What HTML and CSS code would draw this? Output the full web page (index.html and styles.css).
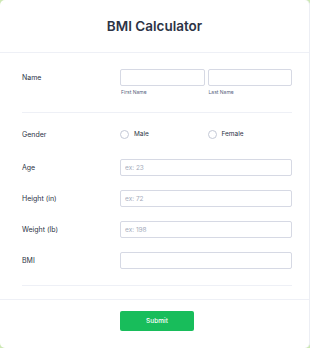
FILE: index.html
```html
<!DOCTYPE html>
<html>
<head>
<meta charset="utf-8">
<link rel="stylesheet" href="styles.css">
</head>
<body>
<div class="frame">
<div class="card">
  <header class="header"><h1 class="title">BMI Calculator</h1></header>
  <form class="form">
    <div class="row row-name">
      <label class="label">Name</label>
      <div class="pair">
        <div class="field"><input class="input" type="text"><span class="sub">First Name</span></div>
        <div class="field"><input class="input" type="text"><span class="sub">Last Name</span></div>
      </div>
    </div>
    <div class="row row-gender">
      <label class="label">Gender</label>
      <div class="pair">
        <label class="radio"><span class="circle"></span>Male</label>
        <label class="radio"><span class="circle"></span>Female</label>
      </div>
    </div>
    <div class="row row-first">
      <label class="label">Age</label>
      <input class="input" type="text" placeholder="ex: 23">
    </div>
    <div class="row">
      <label class="label">Height (in)</label>
      <input class="input" type="text" placeholder="ex: 72">
    </div>
    <div class="row">
      <label class="label">Weight (lb)</label>
      <input class="input" type="text" placeholder="ex: 198">
    </div>
    <div class="row row-last">
      <label class="label">BMI</label>
      <input class="input" type="text">
    </div>
  </form>
  <footer class="footer"><button class="submit" type="button">Submit</button></footer>
</div>
</div>
</body>
</html>
```
FILE: styles.css
```css
html, body {
  margin: 0;
  padding: 0;
  background: #fff;
  overflow: hidden;
}
body {
  font-family: Inter, "Noto Sans", sans-serif;
  color: #2c3345;
}
.frame {
  width: 310px;
  height: 348px;
  background: #cde8b4;
}
.card {
  width: 310px;
  height: 348px;
  background: #fff;
  border-radius: 5px;
  box-sizing: border-box;
  border-right: 1px solid #eceef4;
  overflow: hidden;
}
.header {
  height: 52px;
  border-bottom: 1px solid #eef0f6;
  display: flex;
  align-items: center;
  justify-content: center;
}
.title {
  margin: 0;
  font-size: 13.5px;
  font-weight: 600;
  line-height: 1;
  color: #2c3345;
  padding-top: 1px;
}
.form {
  margin: 0 17px 0 22px;
  height: 246px;
  display: flex;
  flex-direction: column;
}
.row {
  display: grid;
  grid-template-columns: 98px 1fr;
  align-items: center;
  margin-top: 14px;
}
.label {
  font-size: 7px;
  line-height: 17px;
  color: #2c3345;
}
.row-name {
  margin-top: 16px;
  align-items: start;
  padding-bottom: 17px;
  border-bottom: 1px solid #eef0f6;
}
.row-gender {
  margin-top: 17px;
}
.row-gender .label {
  line-height: 9px;
}
.row-first {
  margin-top: 20px;
}
.row-last {
  padding-bottom: 16px;
  border-bottom: 1px solid #eef0f6;
}
.pair {
  display: grid;
  grid-template-columns: 1fr 1fr;
  gap: 3px;
}
.field {
  display: flex;
  flex-direction: column;
}
.input {
  box-sizing: border-box;
  width: 100%;
  height: 17px;
  margin: 0;
  border: 1px solid #d6d9e4;
  border-radius: 2px;
  padding: 0 4px;
  font-family: Inter, "Noto Sans", sans-serif;
  font-size: 6.5px;
  color: #2c3345;
  background: #fff;
  outline: none;
}
.input::placeholder {
  color: #a4abbb;
}
.sub {
  margin-top: 3px;
  font-size: 5px;
  line-height: 6px;
  color: #57647e;
  padding-left: 1px;
}
.radio {
  display: flex;
  align-items: center;
  gap: 5px;
  font-size: 6.5px;
  line-height: 9px;
  color: #2c3345;
}
.circle {
  box-sizing: border-box;
  width: 9px;
  height: 9px;
  border: 1px solid #c4c9d6;
  border-radius: 50%;
}
.footer {
  border-top: 1px solid #eef0f6;
  padding: 11px 0 0 120px;
}
.submit {
  display: block;
  margin: 0;
  width: 74px;
  height: 20px;
  border: 0;
  border-radius: 2px;
  background: #18bd5b;
  color: #fff;
  font-family: Inter, "Noto Sans", sans-serif;
  font-size: 6.5px;
  font-weight: 500;
  padding: 0;
}
```
